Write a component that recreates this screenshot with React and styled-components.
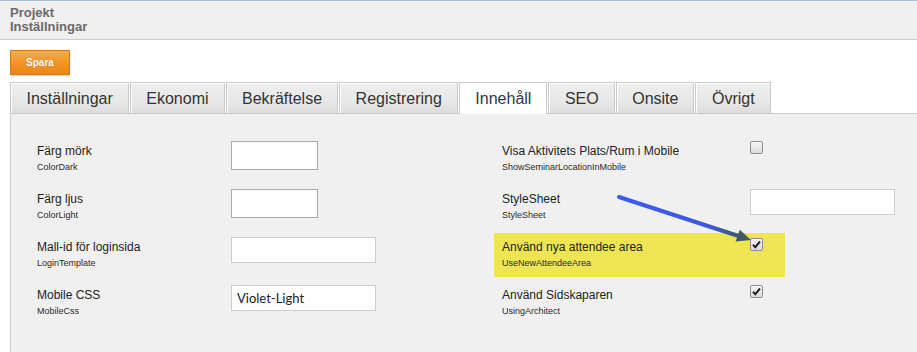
import styled, { createGlobalStyle } from "styled-components";

const GlobalStyle = createGlobalStyle`
  html, body {
    margin: 0;
    padding: 0;
    background: #ffffff;
  }
  body {
    font-family: "Liberation Sans", Arial, sans-serif;
    color: #222;
  }
`;

const Page = styled.div`
  position: relative;
  width: 917px;
  height: 352px;
  overflow: hidden;
  background: #fff;
`;

const Header = styled.header`
  border-top: 1px solid #a9bcd6;
  border-bottom: 1px solid #cdcdcd;
  background: #efefef;
  padding: 5px 10px;
  font-size: 13px;
  font-weight: bold;
  line-height: 14px;
  color: #6a6a6a;
`;

const Toolbar = styled.div`
  padding: 10px 10px 7px;
  display: flex;
`;

const SaveButton = styled.button`
  width: 60px;
  height: 25px;
  border: 1px solid #d47a10;
  background: linear-gradient(#f9ab45, #f39323 55%, #ec8716);
  color: #fff;
  font-family: "Liberation Sans", Arial, sans-serif;
  font-size: 10px;
  font-weight: bold;
  text-shadow: 0 0 1px rgba(160, 80, 0, 0.5);
  box-shadow: 0 1px 1px rgba(0, 0, 0, 0.15);
  padding: 0;
  cursor: pointer;
`;

const TabBar = styled.nav`
  display: flex;
  margin-left: 10px;
  height: 31px;
  position: relative;
  z-index: 1;
`;

const Tab = styled.div`
  height: ${(p) => (p.$active ? "32px" : "31px")};
  box-sizing: border-box;
  padding: 1px 15px 0 15.5px;
  margin-right: 1px;
  border: 1px solid #cacaca;
  border-bottom: none;
  box-shadow: inset 1px 1px 0 #fff;
  background: ${(p) =>
    p.$active ? "#fff" : "linear-gradient(#eeeeee, #e8e8e8 60%, #dcdcdc)"};
  font-size: 16px;
  line-height: 29px;
  color: ${(p) => (p.$active ? "#2c3a48" : "#333")};
  white-space: nowrap;
`;

const Panel = styled.section`
  margin-left: 10px;
  border-left: 1px solid #cacaca;
  border-top: 1px solid #cacaca;
  background: #f0f0f0;
  height: 239px;
  box-sizing: border-box;
  padding: 23px 0 0 18px;
  display: grid;
  grid-template-columns: 465px 291px;
  align-items: start;
`;

const Column = styled.div`
  display: flex;
  flex-direction: column;
  gap: 4px;
`;

const Row = styled.div`
  display: grid;
  grid-template-columns: ${(p) => p.$labelWidth}px auto;
  height: 44px;
  padding: 0 8px;
  background: ${(p) => (p.$highlight ? "#efe552" : "transparent")};
`;

const LabelBlock = styled.div`
  padding-top: 7px;
`;

const Label = styled.div`
  font-size: 12px;
  line-height: 14px;
  color: #222;
  white-space: nowrap;
`;

const Key = styled.div`
  margin-top: 4px;
  font-size: 9px;
  line-height: 11px;
  color: #2a2a2a;
  white-space: nowrap;
`;

const Control = styled.div`
  padding-top: 4px;
`;

const TextInput = styled.input`
  display: block;
  box-sizing: border-box;
  width: ${(p) => (p.$short ? "87px" : "145px")};
  height: ${(p) => (p.$short ? "29px" : "26px")};
  border: 1px solid ${(p) => (p.$short ? "#a9a9a9" : "#cccccc")};
  background: #fff;
  padding: 0 5px;
  font-family: Lato, "Liberation Sans", sans-serif;
  font-size: 13px;
  color: #222;
  outline: none;
`;

const Box = styled.span`
  display: block;
  width: 13px;
  height: 13px;
  box-sizing: border-box;
  margin-top: ${(p) => (p.$highlight ? "1px" : "0")};
  border: 1px solid #8e8e8e;
  border-radius: 2px;
  background: linear-gradient(#f6f6f6, #dadada);
  svg {
    display: block;
  }
`;

const Arrow = styled.svg`
  position: absolute;
  left: 0;
  top: 0;
  pointer-events: none;
`;

function Checkbox({ checked, highlight }) {
  return (
    <Box $highlight={highlight}>
      {checked && (
        <svg width="11" height="11" viewBox="0 0 11 11">
          <path
            d="M2 5.8 L4.3 8.2 L9 2.5"
            fill="none"
            stroke="#262626"
            strokeWidth="2"
          />
        </svg>
      )}
    </Box>
  );
}

const tabs = [
  "Inställningar",
  "Ekonomi",
  "Bekräftelse",
  "Registrering",
  "Innehåll",
  "SEO",
  "Onsite",
  "Övrigt",
];

const leftFields = [
  { label: "Färg mörk", key: "ColorDark", short: true },
  { label: "Färg ljus", key: "ColorLight", short: true },
  { label: "Mall-id för loginsida", key: "LoginTemplate" },
  { label: "Mobile CSS", key: "MobileCss", value: "Violet-Light" },
];

const rightFields = [
  { label: "Visa Aktivitets Plats/Rum i Mobile", key: "ShowSeminarLocationInMobile", check: true },
  { label: "StyleSheet", key: "StyleSheet" },
  { label: "Använd nya attendee area", key: "UseNewAttendeeArea", check: true, checked: true, highlight: true },
  { label: "Använd Sidskaparen", key: "UsingArchitect", check: true, checked: true },
];

export default function App() {
  return (
    <Page>
      <GlobalStyle />
      <Header>
        <div>Projekt</div>
        <div>Inställningar</div>
      </Header>
      <Toolbar>
        <SaveButton>Spara</SaveButton>
      </Toolbar>
      <TabBar>
        {tabs.map((t) => (
          <Tab key={t} $active={t === "Innehåll"}>
            {t}
          </Tab>
        ))}
      </TabBar>
      <Panel>
        <Column>
          {leftFields.map((f) => (
            <Row key={f.key} $labelWidth={194}>
              <LabelBlock>
                <Label>{f.label}</Label>
                <Key>{f.key}</Key>
              </LabelBlock>
              <Control>
                <TextInput $short={f.short} defaultValue={f.value || ""} />
              </Control>
            </Row>
          ))}
        </Column>
        <Column>
          {rightFields.map((f) => (
            <Row key={f.key} $labelWidth={248} $highlight={f.highlight}>
              <LabelBlock>
                <Label>{f.label}</Label>
                <Key>{f.key}</Key>
              </LabelBlock>
              <Control>
                {f.check ? (
                  <Checkbox checked={f.checked} highlight={f.highlight} />
                ) : (
                  <TextInput />
                )}
              </Control>
            </Row>
          ))}
        </Column>
      </Panel>
      <Arrow width="917" height="352" viewBox="0 0 917 352">
        <defs>
          <linearGradient id="shaft" x1="619" y1="197" x2="740" y2="236" gradientUnits="userSpaceOnUse">
            <stop offset="0" stopColor="#3c5cf0" />
            <stop offset="0.75" stopColor="#3d58d8" />
            <stop offset="1" stopColor="#3e5a66" />
          </linearGradient>
        </defs>
        <line x1="619" y1="197" x2="740" y2="236.5" stroke="url(#shaft)" strokeWidth="4" strokeLinecap="round" />
        <polygon points="751,240 735.6,241.6 739.8,229.8" fill="#3e5a60" />
      </Arrow>
    </Page>
  );
}
